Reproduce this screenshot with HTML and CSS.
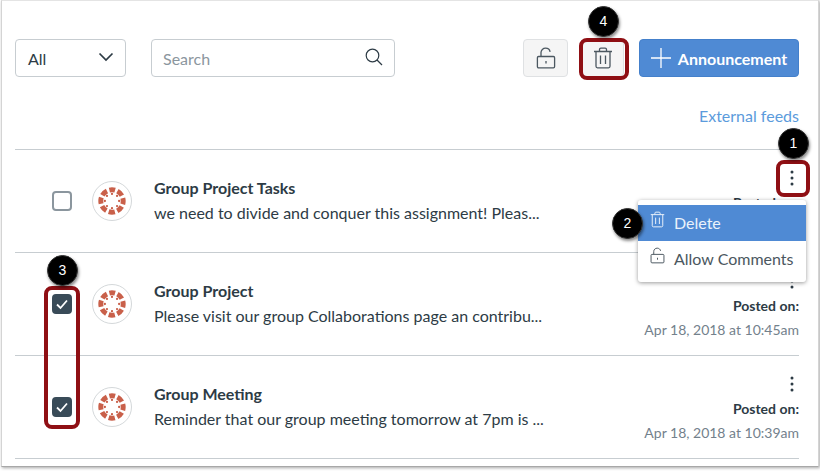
FILE: index.html
```html
<!DOCTYPE html>
<html lang="en">
<head>
<meta charset="utf-8">
<title>Announcements</title>
<link rel="stylesheet" href="styles.css">
</head>
<body>
<svg class="defs" width="0" height="0" aria-hidden="true">
  <defs>
    <symbol id="trash" viewBox="0 0 20 22">
      <path d="M1 4.5h18M6.5 4.5V2.6c0-.8.6-1.4 1.4-1.4h4.2c.8 0 1.4.6 1.4 1.4v1.9M3 4.5v14.8c0 .9.7 1.5 1.5 1.5h11c.8 0 1.5-.6 1.5-1.5V4.5M7.5 8.5v8.5M12.5 8.5v8.5" fill="none" stroke="currentColor" stroke-width="1.3"/>
    </symbol>
    <symbol id="lock" viewBox="0 0 20 22">
      <path d="M5 9.5V5.6C5 3.2 7 1.2 9.6 1.2c2.3 0 4.1 1.5 4.5 3.6M2.6 9.5h14.8c.7 0 1.2.5 1.2 1.2v8.9c0 .7-.5 1.2-1.2 1.2H2.600c-.7 0-1.200-.5-1.200-1.200v-8.900c0-.7.5-1.200 1.200-1.200zM10 14v2.600" fill="none" stroke="currentColor" stroke-width="1.300"/>
    </symbol>
    <symbol id="canvas" viewBox="0 0 40 40">
      <circle cx="20" cy="20" r="11.800" fill="none" stroke="#c9604a" stroke-width="5.200" stroke-dasharray="6.600 2.668" stroke-dashoffset="3.300" transform="rotate(-90 20 20)"/>
      <g fill="#c9604a">
        <circle cx="20" cy="12.500" r="1.200"/><circle cx="20" cy="27.500" r="1.200"/><circle cx="12.500" cy="20" r="1.200"/><circle cx="27.500" cy="20" r="1.200"/>
        <circle cx="14.700" cy="14.700" r="1.200"/><circle cx="25.300" cy="14.700" r="1.200"/><circle cx="14.700" cy="25.300" r="1.200"/><circle cx="25.300" cy="25.300" r="1.200"/>
      </g>
    </symbol>
    <symbol id="kebab" viewBox="0 0 4 16">
      <circle cx="2" cy="2" r="1.500"/><circle cx="2" cy="8" r="1.500"/><circle cx="2" cy="14" r="1.500"/>
    </symbol>
  </defs>
</svg>

<main class="frame">
  <header class="toolbar">
    <div class="select"><span>All</span>
      <svg class="chev" viewBox="0 0 16 10"><path d="M1.500 1.500 8 8l6.500-6.500" fill="none" stroke="currentColor" stroke-width="1.700"/></svg>
    </div>
    <div class="search"><span>Search</span>
      <svg class="mag" viewBox="0 0 18 18"><circle cx="7.500" cy="7.500" r="6.300" fill="none" stroke="currentColor" stroke-width="1.200"/><path d="m12 12 5 5" stroke="currentColor" stroke-width="1.300"/></svg>
    </div>
    <div class="spacer"></div>
    <button class="icon-btn lock-btn"><svg class="ico"><use href="#lock"/></svg></button>
    <button class="icon-btn trash-btn"><svg class="ico"><use href="#trash"/></svg></button>
    <button class="primary"><svg class="plus" viewBox="0 0 20 20"><path d="M10 0v20M0 10h20" stroke="currentColor" stroke-width="1.300"/></svg>Announcement</button>
  </header>

  <div class="feeds"><a>External feeds</a></div>

  <ul class="list">
    <li class="row">
      <span class="check"></span>
      <svg class="avatar"><use href="#canvas"/></svg>
      <div class="body">
        <div class="title">Group Project Tasks</div>
        <div class="sub">we need to divide and conquer this assignment! Pleas...</div>
      </div>
      <div class="meta">
        <svg class="kebab"><use href="#kebab"/></svg>
        <div class="posted">Posted on:</div>
        <div class="date">Apr 18, 2018 at 10:52am</div>
      </div>
    </li>
    <li class="row">
      <span class="check on"><svg viewBox="0 0 20 20"><path d="m5 10.500 3.500 3.500L15 6.500" fill="none" stroke="#fff" stroke-width="1.800"/></svg></span>
      <svg class="avatar"><use href="#canvas"/></svg>
      <div class="body">
        <div class="title">Group Project</div>
        <div class="sub">Please visit our group Collaborations page an contribu...</div>
      </div>
      <div class="meta">
        <svg class="kebab"><use href="#kebab"/></svg>
        <div class="posted">Posted on:</div>
        <div class="date">Apr 18, 2018 at 10:45am</div>
      </div>
    </li>
    <li class="row">
      <span class="check on"><svg viewBox="0 0 20 20"><path d="m5 10.500 3.500 3.500L15 6.500" fill="none" stroke="#fff" stroke-width="1.800"/></svg></span>
      <svg class="avatar"><use href="#canvas"/></svg>
      <div class="body">
        <div class="title">Group Meeting</div>
        <div class="sub">Reminder that our group meeting tomorrow at 7pm is ...</div>
      </div>
      <div class="meta">
        <svg class="kebab"><use href="#kebab"/></svg>
        <div class="posted">Posted on:</div>
        <div class="date">Apr 18, 2018 at 10:39am</div>
      </div>
    </li>
  </ul>

  <div class="menu">
    <div class="item active"><svg class="mi"><use href="#trash"/></svg>Delete</div>
    <div class="item"><svg class="mi"><use href="#lock"/></svg>Allow Comments</div>
  </div>

  <div class="ring ring-kebab"></div>
  <div class="ring ring-checks"></div>
  <div class="ring ring-trash"></div>

  <div class="badge b1">1</div>
  <div class="badge b2">2</div>
  <div class="badge b3">3</div>
  <div class="badge b4">4</div>
</main>
</body>
</html>
```
FILE: styles.css
```css
* { box-sizing: border-box; }
html, body { margin: 0; padding: 0; background: #fff; }
body { font-family: Lato, "Open Sans", sans-serif; color: #2d3b45; width: 820px; height: 471px; overflow: hidden; }
.defs { position: absolute; }
.frame {
  position: relative;
  width: 818px;
  height: 467px;
  margin-left: 1px;
  border: 1px solid #d4d4d4;
  border-top-color: #e4e4e4;
  border-bottom: 1px solid #a8a8a8;
  box-shadow: 1px 1px 3px rgba(0,0,0,.35);
  padding: 38px 19px 0 13px;
  background: #fff;
}
.toolbar { display: flex; align-items: center; height: 38px; }
.select, .search {
  height: 38px;
  border: 1px solid #c7cdd1;
  border-radius: 4px;
  display: flex;
  align-items: center;
  justify-content: space-between;
  font-size: 16px;
}
.select { width: 111px; padding: 0 11px 0 12px; margin-right: 25px; }
.chev { width: 16px; height: 10px; color: #2d3b45; margin-top: -2px; }
.search { width: 244px; padding: 0 11px 0 11px; color: #8b969e; }
.mag { width: 18px; height: 18px; color: #2d3b45; margin-top: -2px; }
.spacer { flex: 1; }
.icon-btn {
  height: 38px;
  background: #f5f5f5;
  border: 1px solid #dfe1e3;
  border-radius: 4px;
  padding: 0;
  display: flex;
  align-items: center;
  justify-content: center;
  color: #4b5760;
}
.lock-btn { width: 45px; margin-right: 14px; }
.trash-btn { width: 42px; margin-right: 15px; }
.ico { width: 20px; height: 22px; }
.primary {
  width: 160px;
  height: 38px;
  background: #4f8ad4;
  border: 1px solid #4480cb;
  border-radius: 4px;
  color: #fff;
  font: 700 16px Lato, sans-serif;
  display: flex;
  align-items: center;
  justify-content: center;
  gap: 7px;
  padding: 0;
}
.plus { width: 20px; height: 20px; }
.feeds { text-align: right; margin-top: 28px; height: 44px; line-height: 22px; font-size: 16px; color: #5b9bdc; }
.list { list-style: none; margin: 0; padding: 0; border-top: 1px solid #c7cdd1; }
.row {
  height: 103px;
  border-bottom: 1px solid #c7cdd1;
  display: flex;
  align-items: flex-start;
  position: relative;
}
.check {
  width: 20px;
  height: 20px;
  border: 2px solid #8b969e;
  border-radius: 4px;
  margin: 41px 0 0 37px;
  flex: none;
}
.check.on { background: #394b58; border-color: #394b58; position: relative; }
.check.on svg { position: absolute; inset: -2px; width: 20px; height: 20px; }
.avatar { width: 40px; height: 40px; border: 1px solid #d4d8da; border-radius: 50%; margin: 31px 0 0 20px; flex: none; }
.body { margin: 26px 0 0 22px; flex: 1; min-width: 0; }
.title { font-size: 16px; font-weight: 700; line-height: 24px; color: #2d3b45; }
.sub { font-size: 16px; line-height: 26px; color: #2d3b45; white-space: nowrap; }
.meta { text-align: right; flex: none; width: 190px; padding-top: 20px; font-size: 14px; }
.kebab { display: block; width: 4px; height: 16px; margin: 0 5px 7px auto; fill: #2d3b45; }
.posted { font-weight: 700; line-height: 20px; }
.date { margin-top: 4px; line-height: 20px; color: #73818c; }
.menu {
  position: absolute;
  left: 636px;
  top: 199px;
  width: 168px;
  height: 82px;
  background: #fff;
  border-radius: 3px;
  padding: 5px 0;
  box-shadow: 0 1px 4px rgba(0,0,0,.4);
}
.item { height: 36px; display: flex; align-items: center; padding: 0 0 2px 12px; gap: 9px; font-size: 16px; color: #4b5760; }
.item.active { background: #4f8ad4; color: #eaf2fb; }
.mi { width: 15px; height: 17px; margin-top: -5px; }
.ring { position: absolute; border: 4px solid #8f0f14; border-radius: 8px; }
.ring-kebab { left: 774px; top: 159px; width: 34px; height: 37px; }
.ring-checks { left: 42px; top: 285px; width: 36px; height: 143px; }
.ring-trash { left: 577px; top: 37px; width: 50px; height: 42px; }
.badge {
  position: absolute;
  width: 31px;
  height: 31px;
  border-radius: 50%;
  background: #000;
  color: #fff;
  border: 1px solid #333;
  font: 14px/29px "Liberation Sans", sans-serif;
  text-align: center;
  box-shadow: 1px 2px 3px rgba(0,0,0,.45);
}
.b1 { left: 776px; top: 127px; }
.b2 { left: 610px; top: 207px; }
.b3 { left: 45px; top: 254px; }
.b4 { left: 586px; top: 5px; }
```
